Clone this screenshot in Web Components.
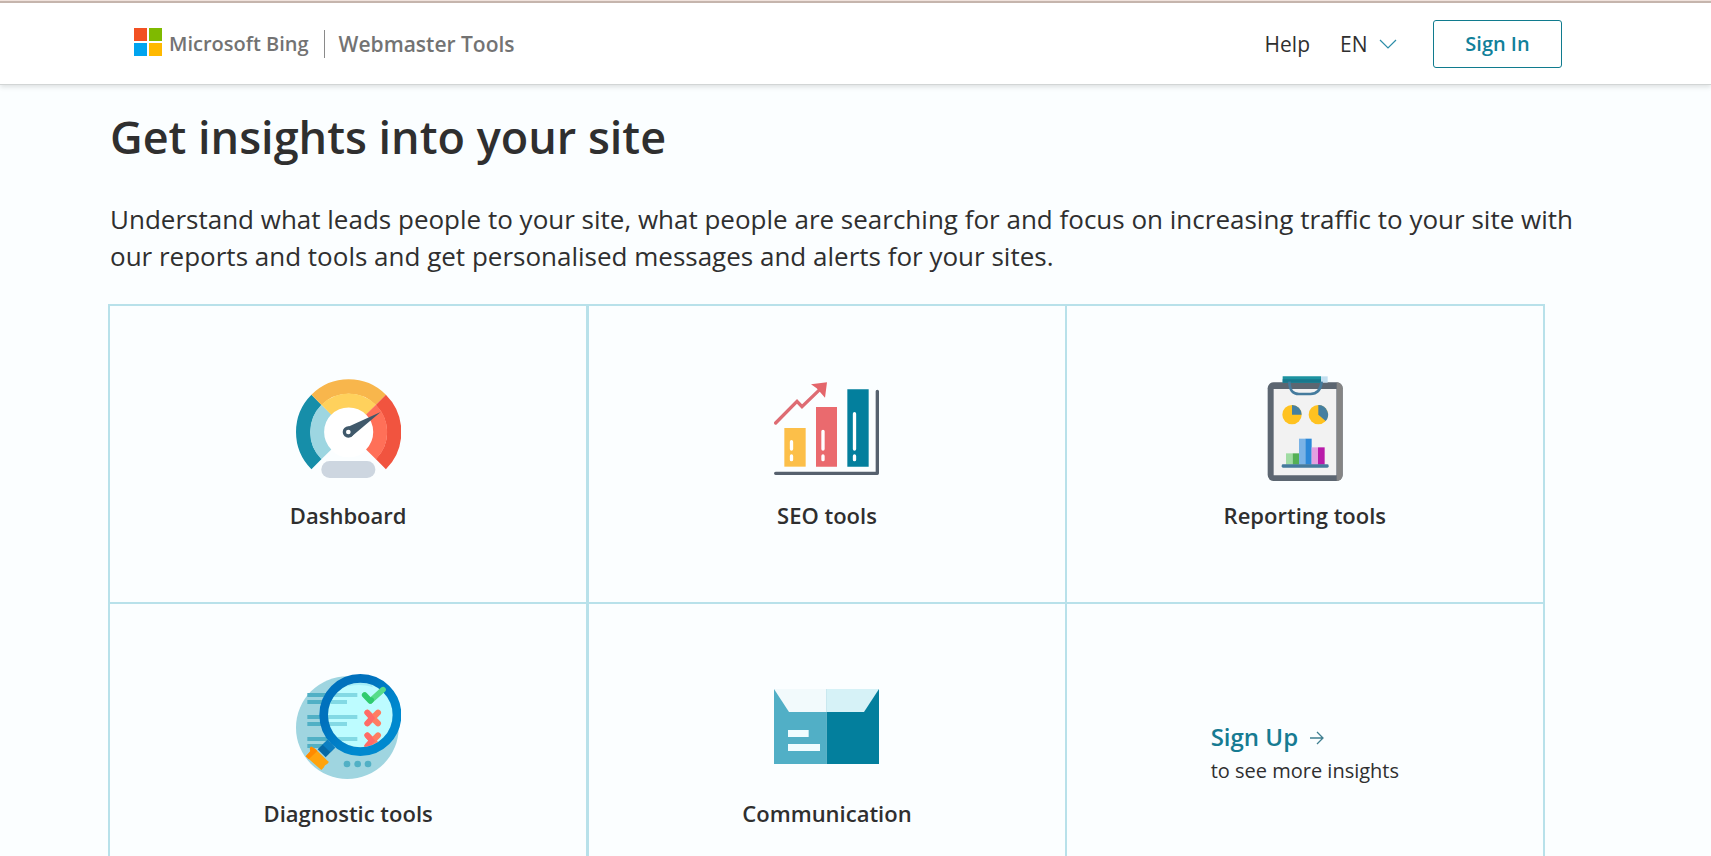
<!DOCTYPE html>
<html lang="en">
<head>
<meta charset="utf-8">
<title>Bing Webmaster Tools</title>
<style>
  html { background: #fbfeff; scrollbar-width: none; }
  body { margin: 0; font-family: "Open Sans", "Noto Sans", sans-serif; color: #2f2f2f; }
</style>
</head>
<body>
<wm-header>
  <wm-logo slot="brand" product="Webmaster Tools">Microsoft Bing</wm-logo>
</wm-header>
<wm-insights>
  <span slot="title">Get insights into your site</span>
  <span slot="lead">Understand what leads people to your site, what people are searching for and focus on increasing traffic to your site with our reports and tools and get personalised messages and alerts for your sites.</span>
  <wm-feature icon="dashboard">Dashboard</wm-feature>
  <wm-feature icon="seo">SEO tools</wm-feature>
  <wm-feature icon="report">Reporting tools</wm-feature>
  <wm-feature icon="diagnostic">Diagnostic tools</wm-feature>
  <wm-feature icon="mail">Communication</wm-feature>
  <wm-signup>to see more insights</wm-signup>
</wm-insights>
<script>
const define = (name, html, setup) => customElements.define(name, class extends HTMLElement {
  constructor() {
    super();
    this.attachShadow({ mode: 'open' });
  }
  connectedCallback() {
    this.shadowRoot.innerHTML = html;
    if (setup) setup(this, this.shadowRoot);
  }
});

const icons = {
  dashboard: `<svg viewBox="48 47 315 315" aria-hidden="true">
    <circle cx="206" cy="215" r="76" fill="#fff"/>
    <g fill="none" stroke-width="43">
      <path d="M109.500 311.500A136.500 136.500 0 0 1 109.500 118.500" stroke="#168ea9"/>
      <path d="M109.500 118.500A136.500 136.500 0 0 1 302.500 118.500" stroke="#f8b64c"/>
      <path d="M302.500 118.500A136.500 136.500 0 0 1 302.500 311.500" stroke="#f1543f"/>
    </g>
    <g fill="none" stroke-width="42">
      <path d="M139 282A95 95 0 0 1 139 148" stroke="#9dd6e1"/>
      <path d="M139 148A95 95 0 0 1 273 148" stroke="#ffd15c"/>
      <path d="M273 148A95 95 0 0 1 273 282" stroke="#ff7058"/>
    </g>
    <path d="M302 155L198 202L213 230Z" fill="#40596b"/>
    <circle cx="205" cy="215" r="17" fill="#40596b"/><circle cx="205" cy="215" r="7" fill="#fff"/>
    <rect x="124" y="302" width="162" height="51" rx="25" fill="#cdd6e0"/></svg>`,
  seo: `<svg viewBox="57 47 315 315" aria-hidden="true">
    <path d="M88 203h64v116H88z" fill="#fcbf49"/><path d="M183 140h63v179h-63z" fill="#ea6a6e"/><path d="M277 87h64v232h-64z" fill="#037f9d"/>
    <path d="M62 188L126 123L141 139L194 88" fill="none" stroke="#de6c73" stroke-width="10" stroke-linecap="round"/>
    <path d="M216 66L168 72L185 84L197 97L210 112Z" fill="#e4666b"/>
    <g stroke="#fff" stroke-width="10" stroke-linecap="round"><path d="M109.500 244v22M109.500 287v11M204 213v53M204 287v11M298.500 160v106M298.500 287v11"/></g>
    <path d="M62 339H367V93" fill="none" stroke="#56616e" stroke-width="10" stroke-linecap="round" stroke-linejoin="round"/></svg>`,
  report: `<svg viewBox="157 47 315 315" aria-hidden="true">
    <rect x="204" y="66" width="225" height="296" rx="18" fill="#5c6671"/>
    <path d="M411 66a18 18 0 0 1 18 18V344a18 18 0 0 1-18 18z" fill="#858585"/>
    <path d="M222 86h188v259H222z" fill="#f2f2f2"/>
    <path d="M249 48h115v19H249z" fill="#1c93a1"/><path d="M249 57h115v10H249z" fill="#17788d"/><path d="M364 48h20v19h-20z" fill="#c3dff0"/>
    <path d="M269 64C270 93 280 101 298 101H332C350 101 363 92 366 64" fill="none" stroke="#457b9d" stroke-width="8"/>
    <circle cx="277" cy="163" r="29" fill="#ffc220"/><path d="M277 163V134a29 29 0 0 1 29 29z" fill="#457fa0"/>
    <circle cx="356" cy="163" r="29" fill="#ffc220"/><path d="M356 163V134A29 29 0 0 1 378 182z" fill="#457fa0"/>
    <path d="M259 279h20v34h-20z" fill="#a0dca3"/><path d="M279 279h19v34h-19z" fill="#54b055"/>
    <path d="M298 235h19v78h-19z" fill="#7ab3e6"/><path d="M317 235h19v78h-19z" fill="#2b88d8"/>
    <path d="M336 261h19v52h-19z" fill="#e3a0e1"/><path d="M355 261h20v52h-20z" fill="#b91ba9"/>
    <rect x="246" y="312" width="141" height="10" rx="4" fill="#457b9d"/></svg>`,
  diagnostic: `<svg viewBox="48 42 315 315" aria-hidden="true">
    <defs><linearGradient id="ring" x1="0" y1="0" x2="1" y2="1"><stop offset=".3" stop-color="#0071bd"/><stop offset=".7" stop-color="#0089cf"/></linearGradient>
    <clipPath id="lens"><circle cx="241" cy="165" r="97"/></clipPath></defs>
    <circle cx="202" cy="203" r="154" fill="#9fd5e0"/>
    <g fill="#51b0c5"><path d="M82 99h80v12H82zM82 120h80v12H82zM82 165h80v12H82zM82 186h80v12H82zM82 231h80v12H82zM82 252h60v12H82z"/>
    <circle cx="201" cy="312" r="10"/><circle cx="233" cy="312" r="10"/><circle cx="264" cy="312" r="10"/></g>
    <circle cx="241" cy="165" r="97" fill="#bdfcff"/>
    <g clip-path="url(#lens)">
      <path d="M144 120C160 84 226 64 278 82V65H144Z" fill="#a4eef7"/>
      <path d="M140 99h92v12h-92zM140 120h61v12h-61zM140 165h92v12h-92zM140 186h61v12h-61zM140 231h92v12h-92z" fill="#83d9e4"/>
      <g stroke="#ff7d62" stroke-width="18" stroke-linecap="round"><path d="M262 158l32 32M294 158l-32 32M262 226l32 32M294 226l-32 32"/></g>
      <path d="M262 158l13 16L262 190M262 226l13 16L262 258" fill="none" stroke="#ff6a68" stroke-width="16" stroke-linecap="round"/>
    </g>
    <circle cx="241" cy="165" r="110" fill="none" stroke="url(#ring)" stroke-width="26"/>
    <path d="M254 105l17 18L309 89" fill="none" stroke="#57dc8a" stroke-width="17" stroke-linecap="round" stroke-linejoin="round"/>
    <path d="M254 105l17 18l3-3" fill="none" stroke="#2fcb70" stroke-width="16" stroke-linecap="round" stroke-linejoin="round"/>
    <path d="M113 268L142 240L165 263L137 292Z" fill="#0769a5"/><path d="M142 240L165 263L151 277L128 254Z" fill="#0c7fc2"/>
    <path d="M92 261c3-3 9 5 13 5l36 35c2 3 8 3 3 9c-5 5-11 5-12 12l-8 8l-47-41l12-13c5-4-3-9 3-15z" fill="#ffa30d"/>
    <path d="M92 261c3-3 9 5 13 5l7 7L86 298l-9-9l12-13c5-4-3-9 3-15z" fill="#ff8a00"/></svg>`,
  mail: `<svg viewBox="132 42 315 315" aria-hidden="true">
    <path d="M132 87h158v225H132z" fill="#51afc6"/><path d="M290 87h157v225H290z" fill="#037f9d"/>
    <path d="M132 87H290V156H177z" fill="#f2fafc"/><path d="M447 87H290V156H402z" fill="#d6f2f7"/>
    <path d="M174 210h62v21h-62zM174 252h96v21h-96z" fill="#effcff"/></svg>`
};

define('wm-logo', `<style>
  :host { display: flex; align-items: center; color: #737373; font-weight: 600; white-space: nowrap; }
  svg { width: 28px; height: 28px; margin: 0 7px 4px 0; flex: none; }
  .name { font-size: 20px; line-height: 28px; }
  .product { font-size: 21px; line-height: 28px; margin-left: 15px; padding-left: 14px; border-left: 1px solid #8a8a8a; }
</style>
<svg viewBox="0 0 28 28" aria-hidden="true"><path fill="#f25022" d="M0 0h13v13H0z"/><path fill="#7fba00" d="M15 0h13v13H15z"/><path fill="#00a4ef" d="M0 15h13v13H0z"/><path fill="#ffb900" d="M15 15h13v13H15z"/></svg>
<span class="name"><slot></slot></span><span class="product"></span>`,
(el, root) => { root.querySelector('.product').textContent = el.getAttribute('product'); });

define('wm-header', `<style>
  :host { display: block; border-top: 1px solid #f0e2dc; border-bottom: 1px solid #d2d5d5; background: #fff; box-shadow: inset 0 2px #c5b5ad, 0 2px 5px rgba(0,0,0,.12); position: relative; }
  header { display: flex; align-items: center; justify-content: space-between; box-sizing: border-box; min-height: 83px; padding: 3px 149px 0 134px; }
  nav { display: flex; align-items: center; font-size: 21px; line-height: 28px; }
  a { color: #2f2f2f; text-decoration: none; margin-right: 30px; }
  .lang { display: flex; align-items: center; margin-right: 36px; }
  select { appearance: none; border: 0; padding: 0; background: none; font: inherit; color: inherit; margin-right: 11px; }
  svg { width: 18px; height: 10px; }
  button { width: 129px; height: 48px; border: 1px solid #107b8e; border-radius: 3px; background: #fff; color: #10809a; font: 600 20px/28px "Open Sans", sans-serif; padding: 0; }
</style>
<header><slot name="brand"></slot>
<nav><a href="#help">Help</a>
<label class="lang"><select aria-label="Language"><option>EN</option></select><svg viewBox="0 0 18 10" aria-hidden="true"><path d="M1 1l8 8l8-8" fill="none" stroke="#2c8da8" stroke-width="1.200"/></svg></label>
<button type="button">Sign In</button></nav></header>`);

define('wm-insights', `<style>
  :host { display: block; padding: 22px 130px 0 108px; }
  h1 { margin: 0 0 34px 2px; font-size: 45px; line-height: 60px; font-weight: 600; }
  p { margin: 0 0 29px 2px; font-size: 26px; line-height: 37px; }
  .grid { display: grid; grid-template-columns: repeat(3, 1fr); margin-right: 36px; border: solid #b8e1ea; border-width: 2px 0 0 2px; }
  ::slotted(wm-feature:nth-of-type(3n+2)) { border-left-width: 1px; }
</style>
<h1><slot name="title"></slot></h1><p><slot name="lead"></slot></p><section class="grid"><slot></slot></section>`);

define('wm-feature', `<style>
  :host { display: flex; flex-direction: column; align-items: center; justify-content: center; gap: 18px; box-sizing: border-box; min-height: 298px; padding-bottom: 2px; border: solid #b8e1ea; border-width: 0 2px 2px 0; }
  svg { display: block; width: 105px; height: 105px; }
  h2 { margin: 0; font-size: 22px; line-height: 32px; font-weight: 600; }
</style>
<div class="art"></div><h2><slot></slot></h2>`,
(el, root) => { root.querySelector('.art').innerHTML = icons[el.getAttribute('icon')]; });

define('wm-signup', `<style>
  :host { display: flex; align-items: center; justify-content: center; box-sizing: border-box; min-height: 298px; border: solid #b8e1ea; border-width: 0 2px 2px 0; }
  div { padding-top: 4px; }
  a { display: flex; align-items: center; gap: 12px; color: #167b92; text-decoration: none; font-size: 24px; line-height: 34px; font-weight: 600; }
  svg { width: 14px; height: 14px; margin-top: 2px; }
  p { margin: 0; font-size: 20px; line-height: 34px; }
</style>
<div><a href="#signup">Sign Up <svg viewBox="0 0 14 14" aria-hidden="true"><path d="M0 7h13M7 1l6 6l-6 6" fill="none" stroke="#3f7f90" stroke-width="1.300"/></svg></a><p><slot></slot></p></div>`);
</script>
</body>
</html>
